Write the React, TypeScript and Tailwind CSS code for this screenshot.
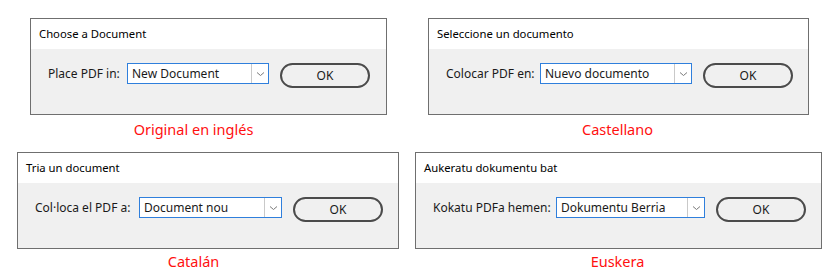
import React from 'react';

interface DialogProps {
  title: string;
  label: string;
  value: string;
  caption: string;
  left: number;
  width: number;
  labelW: number;
  selectW: number;
  captionW: number;
  lastRow?: boolean;
}

const dialogs: DialogProps[][] = [
  [
    { title: 'Choose a Document', label: 'Place PDF in:', value: 'New Document', caption: 'Original en inglés', left: 30, width: 357, labelW: 79, selectW: 142, captionW: 327 },
    { title: 'Seleccione un documento', label: 'Colocar PDF en:', value: 'Nuevo documento', caption: 'Castellano', left: 41, width: 381, labelW: 94, selectW: 152, captionW: 379 },
  ],
  [
    { title: 'Tria un document', label: 'Col·loca el PDF a:', value: 'Document nou', caption: 'Catalán', left: 17, width: 382, labelW: 104, selectW: 143, captionW: 353, lastRow: true },
    { title: 'Aukeratu dokumentu bat', label: 'Kokatu PDFa hemen:', value: 'Dokumentu Berria', caption: 'Euskera', left: 16, width: 407, labelW: 123, selectW: 149, captionW: 405, lastRow: true },
  ],
];

function Chevron() {
  return (
    <svg width="9" height="6" viewBox="0 0 9 6" className="text-[#7a7a7a]">
      <path d="M1 1.5 L4.5 4.5 L8 1.5" fill="none" stroke="currentColor" strokeWidth="1" />
    </svg>
  );
}

function Dialog({ title, label, value, caption, left, width, labelW, selectW, captionW, lastRow }: DialogProps) {
  return (
    <div className="flex flex-col" style={{ marginLeft: left }}>
      <div className="h-[97px] border border-[#6f6f6f] flex flex-col" style={{ width }}>
        {/* Title bar */}
        <div className="h-[30px] bg-white flex items-center pl-[8px] text-[11.3px] text-black">{title}</div>

        {/* Body */}
        <div className="flex-1 bg-[#f0f0f0] flex items-start pl-[17px] pt-[14px]">
          <div className="h-[21px] flex items-center whitespace-nowrap text-[12px] text-[#1a1a1a]" style={{ width: labelW }}>
            {label}
          </div>
          <div className="h-[21px] flex bg-white border border-[#2f7fdc]" style={{ width: selectW }}>
            <div className="flex-1 flex items-center pl-[4px] text-[12px] text-[#1a1a1a] whitespace-nowrap">{value}</div>
            <div className="w-[17px] border-l border-[#c9c9c9] flex items-center justify-center">
              <Chevron />
            </div>
          </div>
          <button className="ml-[11px] w-[90px] h-[25px] rounded-full border-2 border-[#4b4b4b] bg-[#f0f0f0] text-[12px] text-[#1a1a1a] flex items-center justify-center pt-[1px]">
            OK
          </button>
        </div>
      </div>
      <div
        className={
          lastRow
            ? 'text-center text-[14.5px] leading-[14px] text-[#ff1010] mt-[5px] whitespace-nowrap'
            : 'text-center text-[14.5px] leading-[15px] text-[#ff1010] mt-[7px] whitespace-nowrap'
        }
        style={{ width: captionW }}
      >
        {caption}
      </div>
    </div>
  );
}

export default function App() {
  return (
    <div className="w-[838px] h-[271px] bg-white overflow-hidden font-['Noto_Sans',sans-serif]">
      <div className="flex pt-[18px]">
        {dialogs[0].map((d) => (
          <Dialog key={d.title} {...d} />
        ))}
      </div>
      <div className="flex mt-[15px]">
        {dialogs[1].map((d) => (
          <Dialog key={d.title} {...d} />
        ))}
      </div>
    </div>
  );
}
